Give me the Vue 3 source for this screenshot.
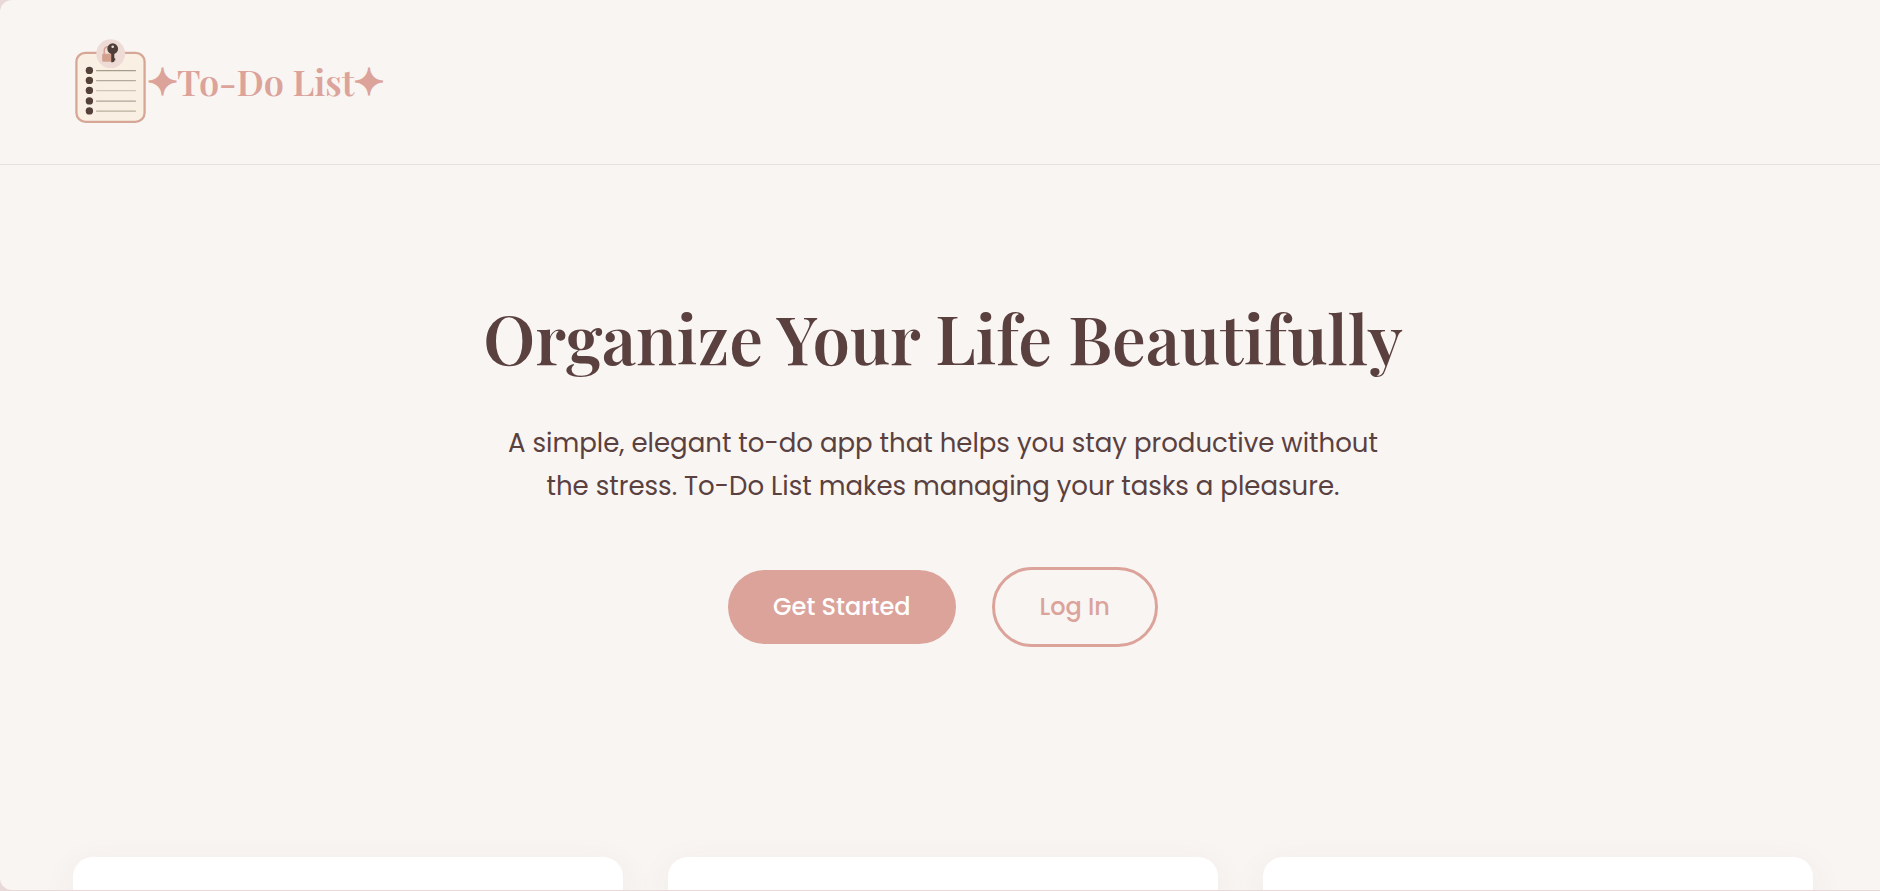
<script setup>
const bullets = [
  { y: 35, tone: '#a69c8d' },
  { y: 45, tone: '#b5ab9c' },
  { y: 55, tone: '#cfc5b6' },
  { y: 65.5, tone: '#b0a696' },
  { y: 75.5, tone: '#b9af9e' },
]
const cards = [1, 2, 3]
</script>

<template>
  <div class="backdrop">
    <div class="window">
      <header class="header">
        <svg class="logo" viewBox="0 0 75 90" aria-hidden="true">
          <rect x="3.4" y="17.8" width="68.2" height="69" rx="9" fill="#f9f0e3" stroke="#d6a797" stroke-width="2.3" />
          <g v-for="b in bullets" :key="b.y">
            <circle cx="16.4" :cy="b.y + 0.4" r="3.7" fill="#54413a" />
            <rect x="23" :y="b.y" width="40" height="1.3" rx="0.6" :fill="b.tone" />
          </g>
          <circle cx="37.7" cy="18.7" r="14.4" fill="#efdbd5" />
          <path d="M31.2 19v-3.2q0-4.2 4-4.2" fill="none" stroke="#d3a08e" stroke-width="1.4" />
          <rect x="29.2" y="18.8" width="9.4" height="8" rx="1" fill="#d3a08e" />
          <circle cx="39.7" cy="13.7" r="5.4" fill="#4f3d37" />
          <circle cx="39.7" cy="11.8" r="1.3" fill="#efdbd5" />
          <path d="M38.2 18h3.1v8.4l-1.4.8h-1.7z" fill="#4f3d37" />
          <path d="M41 23.2h1.2v2.4H41z" fill="#4f3d37" />
        </svg>
        <span class="brand"><span class="star">✦</span>To-Do List<span class="star">✦</span></span>
      </header>

      <main>
        <section class="hero">
          <h1>Organize Your Life Beautifully</h1>
          <p>
            A simple, elegant to-do app that helps you stay productive without
            the stress. To-Do List makes managing your tasks a pleasure.
          </p>
          <div class="actions">
            <a class="btn primary" href="#">Get Started</a>
            <a class="btn outline" href="#">Log In</a>
          </div>
        </section>
        <section class="cards">
          <article v-for="c in cards" :key="c" class="card"></article>
        </section>
      </main>
    </div>
  </div>
</template>

<style>
body {
  margin: 0;
}
</style>

<style scoped>
.backdrop {
  box-sizing: border-box;
  height: 100vh;
  padding-bottom: 1px;
  background: #e8d8d8;
}

.window {
  height: 100%;
  overflow: hidden;
  border-radius: 12px 0 0 12px;
  background: #f9f5f2;
  color: #5a413f;
  font-family: Poppins, Inter, sans-serif;
}

.header {
  display: flex;
  align-items: center;
  padding: 35px 67px 39px 73px;
  border-bottom: 1px solid #e8e2de;
}

.logo {
  flex: none;
  width: 75px;
  height: 90px;
}

.brand {
  display: flex;
  align-items: center;
  padding-top: 2px;
  color: #dba39a;
  font: 600 36px/54px "Playfair Display", "Liberation Serif", serif;
}

.star {
  margin: 0 -1px;
  padding-top: 4px;
  font-family: "DejaVu Sans", sans-serif;
  font-weight: 400;
  font-size: 37px;
  -webkit-text-stroke: 2px #dba39a;
}

.hero {
  display: flex;
  flex-direction: column;
  align-items: center;
  padding: 131px 67px 210px 73px;
  text-align: center;
}

h1 {
  margin: 0 0 42px;
  font: 600 67px/84px "Playfair Display", "Liberation Serif", serif;
}

p {
  max-width: 900px;
  margin: 0 0 59px;
  font-size: 26px;
  line-height: 43px;
}

.actions {
  display: flex;
  align-items: center;
  gap: 36px;
}

.btn {
  padding: 19px 45px;
  border-radius: 40px;
  font-size: 24px;
  font-weight: 500;
  line-height: 36px;
  text-decoration: none;
}

.primary {
  background: #dba39a;
  color: #fff;
}

.outline {
  border: 3px solid #dba39a;
  color: #dba39a;
}

.cards {
  display: grid;
  grid-template-columns: repeat(3, 1fr);
  gap: 45px;
  padding: 0 67px 0 73px;
}

.card {
  min-height: 300px;
  border-radius: 20px;
  background: #fff;
  box-shadow: 0 8px 36px rgba(90, 64, 64, 0.06);
}
</style>
